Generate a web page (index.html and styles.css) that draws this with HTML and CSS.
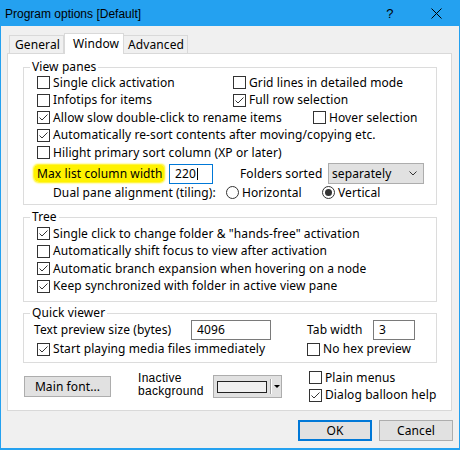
FILE: index.html
```html
<!DOCTYPE html>
<html>
<head>
<meta charset="utf-8">
<title>Program options</title>
<link rel="stylesheet" href="styles.css">
</head>
<body>
<div class="window">
  <div class="titlebar">
    <span class="title">Program options [Default]</span>
    <span class="cap help">?</span>
    <span class="cap close"><svg width="11" height="11" viewBox="0 0 11 11"><path d="M0.5 0.5L10.5 10.5M10.5 0.5L0.5 10.5" stroke="#000" stroke-width="1" fill="none"/></svg></span>
  </div>
  <div class="body">
    <div class="tabs">
      <div class="tab t-general">General</div>
      <div class="tab t-window active">Window</div>
      <div class="tab t-advanced">Advanced</div>
    </div>
    <div class="panel">
      <fieldset class="group g-view">
        <legend>View panes</legend>
        <div class="content">
          <div class="row">
            <div class="cb w196"><span class="box"></span>Single click activation</div>
            <div class="cb"><span class="box"></span>Grid lines in detailed mode</div>
          </div>
          <div class="row">
            <div class="cb w196"><span class="box"></span>Infotips for items</div>
            <div class="cb"><span class="box"><svg viewBox="0 0 11 11" class="chk"><polyline points="1.5,5.5 4,8 9.5,2.5"/></svg></span>Full row selection</div>
          </div>
          <div class="row">
            <div class="cb w276"><span class="box"><svg viewBox="0 0 11 11" class="chk"><polyline points="1.5,5.5 4,8 9.5,2.5"/></svg></span>Allow slow double-click to rename items</div>
            <div class="cb"><span class="box"></span>Hover selection</div>
          </div>
          <div class="row">
            <div class="cb"><span class="box"><svg viewBox="0 0 11 11" class="chk"><polyline points="1.5,5.5 4,8 9.5,2.5"/></svg></span>Automatically re-sort contents after moving/copying etc.</div>
          </div>
          <div class="row">
            <div class="cb"><span class="box"></span>Hilight primary sort column (XP or later)</div>
          </div>
          <div class="row row-max">
            <div class="maxlabel"><span class="marker">Max list column width</span></div>
            <div class="edit focus w44">220<span class="caret"></span></div>
            <div class="sortlabel">Folders sorted</div>
            <div class="select"><span>separately</span><svg width="8" height="5" viewBox="0 0 8 5"><path d="M0.5 0.5L4 4L7.5 0.5" stroke="#333" fill="none"/></svg></div>
          </div>
          <div class="row row-dual">
            <div class="duallabel">Dual pane alignment (tiling):</div>
            <div class="rb w96"><span class="radio"></span>Horizontal</div>
            <div class="rb"><span class="radio on"><span class="dot"></span></span>Vertical</div>
          </div>
        </div>
      </fieldset>

      <fieldset class="group g-tree">
        <legend>Tree</legend>
        <div class="content">
          <div class="row">
            <div class="cb"><span class="box"><svg viewBox="0 0 11 11" class="chk"><polyline points="1.5,5.5 4,8 9.5,2.5"/></svg></span>Single click to change folder &amp; "hands-free" activation</div>
          </div>
          <div class="row">
            <div class="cb"><span class="box"></span>Automatically shift focus to view after activation</div>
          </div>
          <div class="row">
            <div class="cb"><span class="box"><svg viewBox="0 0 11 11" class="chk"><polyline points="1.5,5.5 4,8 9.5,2.5"/></svg></span>Automatic branch expansion when hovering on a node</div>
          </div>
          <div class="row">
            <div class="cb"><span class="box"><svg viewBox="0 0 11 11" class="chk"><polyline points="1.5,5.5 4,8 9.5,2.5"/></svg></span>Keep synchronized with folder in active view pane</div>
          </div>
        </div>
      </fieldset>

      <fieldset class="group g-quick">
        <legend>Quick viewer</legend>
        <div class="content">
          <div class="row row-edit">
            <div class="qlabel">Text preview size (bytes)</div>
            <div class="edit w80">4096</div>
            <div class="tablabel">Tab width</div>
            <div class="edit w42">3</div>
          </div>
          <div class="row row-q2">
            <div class="cb w270"><span class="box"><svg viewBox="0 0 11 11" class="chk"><polyline points="1.5,5.5 4,8 9.5,2.5"/></svg></span>Start playing media files immediately</div>
            <div class="cb"><span class="box"></span>No hex preview</div>
          </div>
        </div>
      </fieldset>

      <div class="bottom">
        <div class="btn fontbtn">Main font...</div>
        <div class="inactive"><div class="iline">Inactive</div><div class="iline">background</div></div>
        <div class="colorbtn"><span class="swatch"></span><span class="divider"></span><span class="arrow"></span></div>
        <div class="checks">
          <div class="row"><div class="cb"><span class="box"></span>Plain menus</div></div>
          <div class="row"><div class="cb"><span class="box"><svg viewBox="0 0 11 11" class="chk"><polyline points="1.5,5.5 4,8 9.5,2.5"/></svg></span>Dialog balloon help</div></div>
        </div>
      </div>
    </div>
    <div class="buttons">
      <div class="btn default">OK</div>
      <div class="btn">Cancel</div>
    </div>
  </div>
</div>
</body>
</html>
```
FILE: styles.css
```css
* { box-sizing: border-box; }
html, body { margin: 0; padding: 0; background: #fff; }
body {
  font-family: "Noto Sans", "Liberation Sans", Arial, sans-serif;
  font-size: 12px;
  line-height: 16px;
  letter-spacing: 0.1px;
  color: #000;
}
.window {
  width: 460px;
  height: 450px;
  border: 1px solid #24a1f0;
  border-bottom-width: 2px;
  background: #f0f0f0;
  display: flex;
  flex-direction: column;
}
.titlebar {
  height: 25px;
  flex: none;
  background: #24a1f0;
  display: flex;
  align-items: center;
}
.title {
  flex: 1;
  padding-left: 4px;
  font-family: "Liberation Sans", Arial, sans-serif;
  letter-spacing: 0;
}
.cap {
  width: 46px;
  height: 100%;
  display: flex;
  justify-content: center;
  align-items: center;
}
.help { font-size: 13px; font-family: "Liberation Sans", Arial, sans-serif; }
.body { flex: 1; padding: 7px 7px 0 6px; }

.tabs {
  display: flex;
  align-items: flex-end;
  height: 20px;
  margin-left: 2px;
}
.tab {
  height: 18px;
  border: 1px solid #d9d9d9;
  border-bottom: none;
  background: #f0f0f0;
  display: flex;
  align-items: center;
}
.t-general { width: 55px; padding-left: 5px; }
.t-window {
  width: 60px;
  height: 21px;
  margin-bottom: -1px;
  padding-left: 8px;
  background: #fff;
  position: relative;
  z-index: 1;
}
.t-advanced { width: 64px; padding-left: 4px; border-left: none; }

.panel {
  height: 358px;
  background: #fff;
  border: 1px solid #d9d9d9;
  padding: 6px 0 0 15px;
}
.group {
  margin: 0;
  padding: 0 0 3px 0;
  border: 1px solid #dcdcdc;
  width: 414px;
  min-width: 0;
}
.group legend {
  margin-left: 6px;
  padding: 0 2px;
  line-height: 14px;
}
.g-tree { margin-top: 5px; padding-bottom: 6px; }
.g-tree .content { padding-top: 1px; }
.g-quick { margin-top: 4px; padding-bottom: 4px; }
.content { padding-left: 13px; }
.row {
  display: flex;
  align-items: center;
  height: 17.5px;
  white-space: nowrap;
}
.cb, .rb { display: flex; align-items: center; gap: 3px; }
.w196 { width: 196px; }
.w276 { width: 276px; }
.w270 { width: 270px; }
.w96 { width: 96px; }
.box {
  width: 13px;
  height: 13px;
  flex: none;
  border: 1px solid #333;
  background: #fff;
  display: flex;
}
.chk { width: 11px; height: 11px; }
.chk polyline { fill: none; stroke: #333; stroke-width: 1; }
.radio {
  width: 13px;
  height: 13px;
  flex: none;
  border: 1px solid #333;
  border-radius: 50%;
  background: #fff;
  display: flex;
  align-items: center;
  justify-content: center;
}
.dot { width: 7px; height: 7px; border-radius: 50%; background: #333; }

.row-max { height: 21px; margin-top: 1.5px; }
.maxlabel { width: 132px; }
.marker {
  background: #fff200;
  box-shadow: 0 0 2px 1px #fff200;
  border-radius: 4px 3px 4px 5px;
  padding: 0 1px 0 3px;
  margin-left: -3px;
}
.edit {
  height: 20px;
  border: 1px solid #7a7a7a;
  background: #fff;
  display: flex;
  align-items: center;
  padding-left: 5px;
}
.edit.focus { border-color: #0078d7; }
.w44 { width: 44px; }
.w80 { width: 80px; }
.w42 { width: 42px; }
.caret { width: 1px; height: 12px; background: #000; margin-left: 1px; }
.sortlabel { margin-left: 27px; width: 88px; }
.select {
  width: 96px;
  height: 21px;
  background: #e1e1e1;
  border: 1px solid #adadad;
  display: flex;
  align-items: center;
  justify-content: space-between;
  padding: 0 6px 0 3px;
}
.row-dual { height: 17px; }
.duallabel { width: 189px; padding-left: 16px; }

.row-edit { height: 20px; }
.qlabel { width: 157px; margin-left: -3px; }
.tablabel { width: 66px; margin-left: 36px; }
.row-q2 { height: 18px; }

.bottom {
  display: flex;
  align-items: flex-start;
  margin-top: 6px;
  padding-left: 1px;
}
.btn {
  height: 21px;
  width: 74px;
  background: #e1e1e1;
  border: 1px solid #adadad;
  display: flex;
  align-items: center;
  justify-content: center;
}
.fontbtn { width: 87px; margin-top: 7px; }
.inactive {
  margin-left: 27px;
  width: 75px;
  margin-top: 2.5px;
  font-family: "Liberation Sans", Arial, sans-serif;
  font-size: 12px;
  letter-spacing: 0.3px;
}
.iline { height: 13.5px; line-height: 13.5px; }
.colorbtn {
  width: 69px;
  height: 23px;
  margin-top: 6px;
  background: #e1e1e1;
  border: 1px solid #adadad;
  display: flex;
  align-items: center;
}
.swatch {
  width: 50px;
  height: 12px;
  margin-left: 3px;
  border: 1px solid #222;
  background: #f0f0f0;
}
.divider {
  width: 2px;
  height: 15px;
  margin-left: 3px;
  border-left: 1px solid #a0a0a0;
  border-right: 1px solid #fff;
}
.arrow {
  margin-left: 2px;
  width: 0;
  height: 0;
  border-left: 3px solid transparent;
  border-right: 3px solid transparent;
  border-top: 3px solid #000;
}
.checks { margin-left: 27px; }

.buttons {
  display: flex;
  justify-content: flex-end;
  gap: 7px;
  margin-top: 9px;
  margin-right: -1px;
}
.btn.default { border: 2px solid #0078d7; }
```
